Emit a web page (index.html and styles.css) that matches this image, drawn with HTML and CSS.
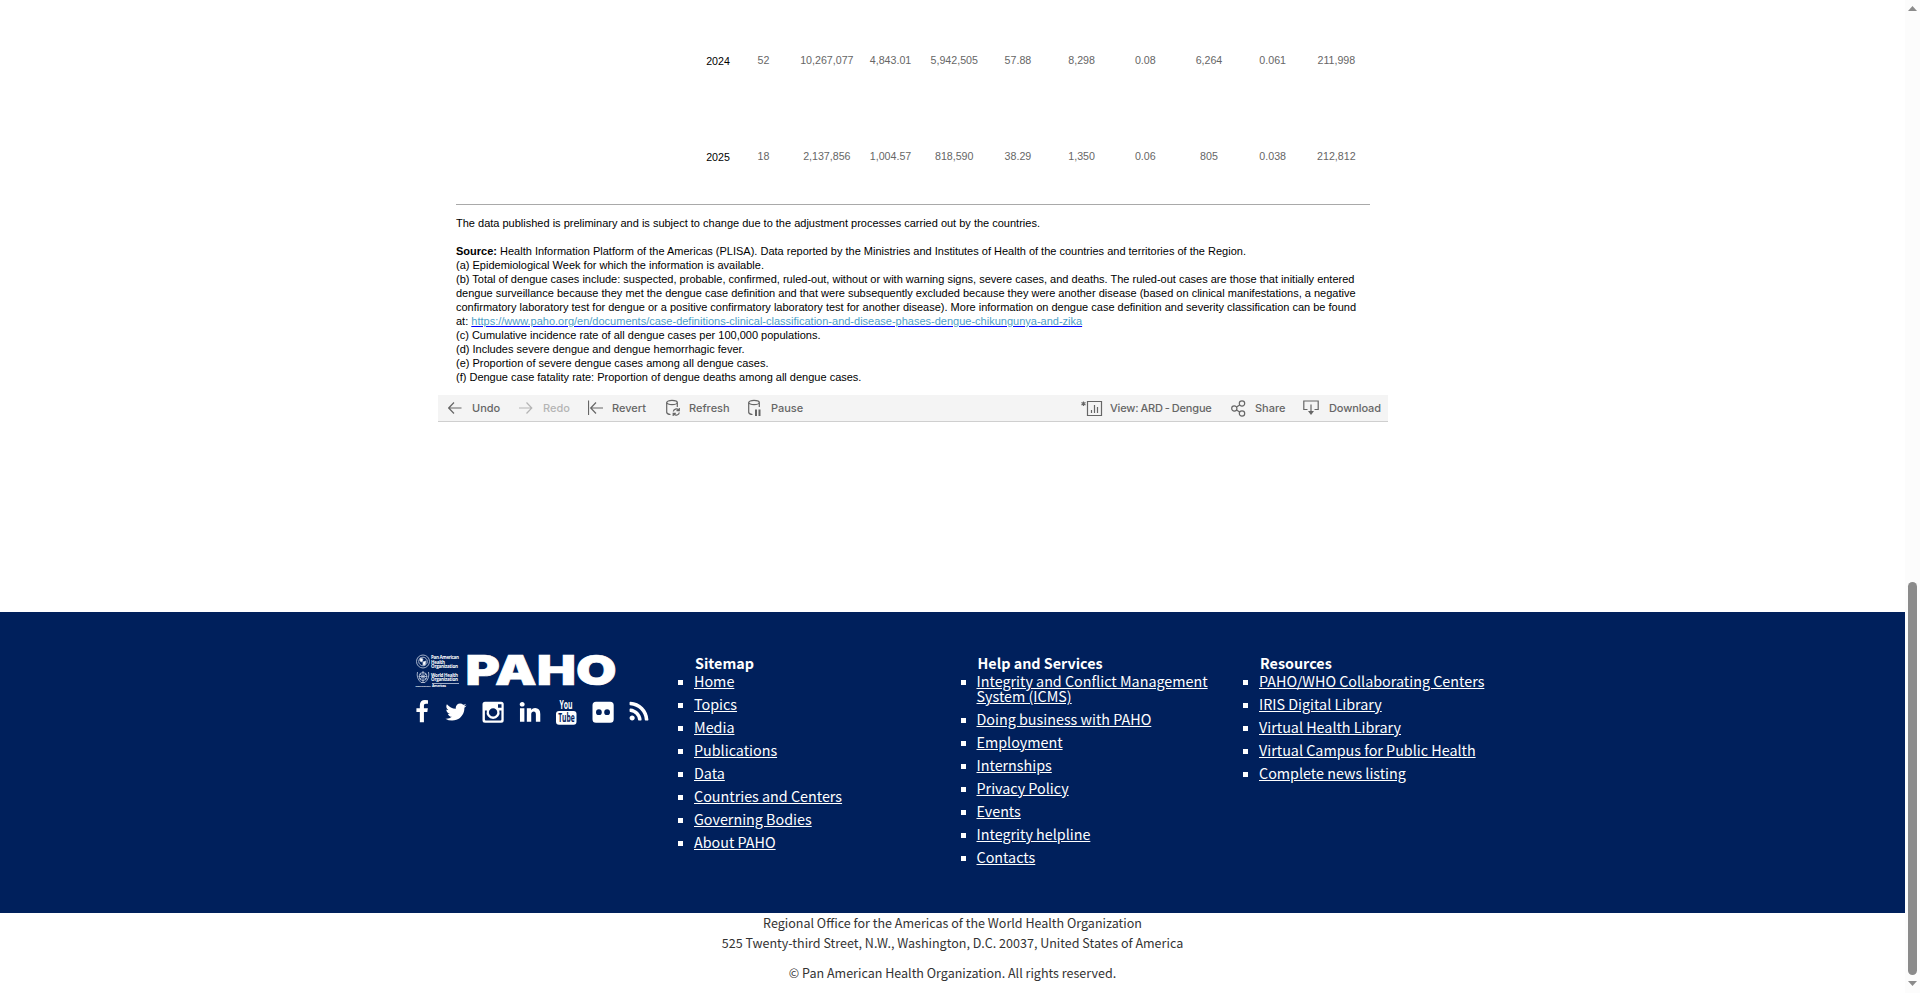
FILE: index.html
```html
<!DOCTYPE html>
<html lang="en">
<head>
<meta charset="utf-8">
<title>PAHO - Dengue</title>
<link rel="stylesheet" href="styles.css">
</head>
<body>
<div class="page">
  <main class="viz">
    <div class="dash">
      <div class="row"><span class="year">2024</span><span class="week">52</span><span>10,267,077</span><span>4,843.01</span><span>5,942,505</span><span>57.88</span><span>8,298</span><span>0.08</span><span>6,264</span><span>0.061</span><span>211,998</span></div>
      <div class="row"><span class="year">2025</span><span class="week">18</span><span>2,137,856</span><span>1,004.57</span><span>818,590</span><span>38.29</span><span>1,350</span><span>0.06</span><span>805</span><span>0.038</span><span>212,812</span></div>
      <div class="notes">
        <p>The data published is preliminary and is subject to change due to the adjustment processes carried out by the countries.</p>
        <p class="gap"><b>Source:</b> Health Information Platform of the Americas (PLISA). Data reported by the Ministries and Institutes of Health of the countries and territories of the Region.</p>
        <p>(a) Epidemiological Week for which the information is available.</p>
        <p>(b) Total of dengue cases include: suspected, probable, confirmed, ruled-out, without or with warning signs, severe cases, and deaths. The ruled-out cases are those that initially entered<br>dengue surveillance because they met the dengue case definition and that were subsequently excluded because they were another disease (based on clinical manifestations, a negative<br>confirmatory laboratory test for dengue or a positive confirmatory laboratory test for another disease). More information on dengue case definition and severity classification can be found<br>at: <a href="#">https://www.paho.org/en/documents/case-definitions-clinical-classification-and-disease-phases-dengue-chikungunya-and-zika</a></p>
        <p>(c) Cumulative incidence rate of all dengue cases per 100,000 populations.</p>
        <p>(d) Includes severe dengue and dengue hemorrhagic fever.</p>
        <p>(e) Proportion of severe dengue cases among all dengue cases.</p>
        <p>(f) Dengue case fatality rate: Proportion of dengue deaths among all dengue cases.</p>
      </div>
    </div>
    <div class="toolbar">
      <div class="tool undo"><svg width="14" height="12" viewBox="0 0 14 12"><path d="M13.500 6H1M6 .5L.7 6L6 11.500"/></svg><span>Undo</span></div>
      <div class="tool redo"><svg width="14" height="12" viewBox="0 0 14 12"><path d="M0 6H12.500M7.500 .5L12.800 6L7.500 11.500"/></svg><span>Redo</span></div>
      <div class="tool revert"><svg width="16" height="16" viewBox="0 0 16 16"><path d="M.5 .5V15M15 8H3M8 2.500L2.700 8L8 13.500"/></svg><span>Revert</span></div>
      <div class="tool refresh"><svg width="15" height="18" viewBox="0 0 15 18"><ellipse cx="6" cy="3.500" rx="5.300" ry="2.200"/><path d="M.7 3.500V13.500Q1.300 15.300 4.500 15.500M11.300 3.500V8M7.300 12.500A3 3 0 0 1 12.500 11L13 11.500M13.300 9V11.700H10.500M13.300 13.500A3 3 0 0 1 8 15L7.500 14.500M7.200 17V14.300H9.800"/></svg><span>Refresh</span></div>
      <div class="tool pause"><svg width="15" height="18" viewBox="0 0 15 18"><ellipse cx="6" cy="3.500" rx="5.300" ry="2.200"/><path d="M.7 3.500V13.500Q1.300 15.300 4.500 15.500M11.300 3.500V8"/><path class="fill" d="M7 10.500h2v6.500h-2zM10.500 10.500h2v6.500h-2z"/></svg><span>Pause</span></div>
      <div class="tool view"><svg width="22" height="17" viewBox="0 0 22 17"><path d="M6.500 1.500H20.500V15.500H6.500ZM10.500 10V13M13.500 5V13M16.500 7V13M2.500 1.500V6M.5 2.500L4.500 5M4.500 2.500L.5 5"/></svg><span>View: ARD - Dengue</span></div>
      <div class="tool share"><svg width="15" height="17" viewBox="0 0 15 17"><circle cx="3.300" cy="8.500" r="2.600"/><circle cx="11" cy="3.500" r="2.700"/><circle cx="11" cy="13.500" r="2.700"/><path d="M5.500 7.100L8.700 5M5.500 9.900L8.700 12"/></svg><span>Share</span></div>
      <div class="tool download"><svg width="16" height="16" viewBox="0 0 16 16"><path d="M4.500 9.500H.8V1H15.200V9.500H11.500M8 4.500V13"/><path class="fill" d="M5 11H11L8 15z"/></svg><span>Download</span></div>
    </div>
  </main>
  <footer class="footer">
    <div class="brand">
      <svg class="logo" width="202" height="36" viewBox="0 0 202 36">
        <g class="seal"><circle cx="8" cy="8.500" r="6.500"/><circle cx="8" cy="8.500" r="4.300"/><circle cx="8" cy="23.500" r="4"/><path d="M2.500 19Q1 25 6 29.500H10Q15 25 13.500 19M8 18V30M4 23.500H12M5 21L11 26M11 21L5 26"/><path class="fill" d="M5 5L8 6L7 9L5 8ZM8 9L11 8L10 12L8 12Z"/><path class="rule" d="M17 30.500H44"/></g>
        <g class="tiny"><text x="16" y="6" textLength="28">Pan American</text><text x="16" y="10.500" textLength="14">Health</text><text x="16" y="15" textLength="27">Organization</text><text x="16" y="23.500" textLength="27">World Health</text><text x="16" y="28" textLength="27">Organization</text><text class="micro" x="0.500" y="33.600" textLength="15">REGIONAL OFFICE FOR THE</text><text class="amer" x="17" y="34" textLength="14">Americas</text></g>
        <text class="name" x="50.500" y="32" textLength="151" lengthAdjust="spacingAndGlyphs">PAHO</text>
      </svg>
      <div class="social">
        <svg viewBox="0 0 1792 1792"><path d="M1343 12v264h-157q-86 0-116 36t-30 108v189h293l-39 296h-254v759h-306v-759h-255v-296h255v-218q0-186 104-288.500t277-102.500q147 0 228 12z"/></svg>
        <svg class="tw" viewBox="0 0 1792 1792"><path d="M1684 408q-67 98-162 167 1 14 1 42 0 130-38 259.500t-115.500 248.500-184.500 210.500-258 146-323 54.500q-271 0-496-145 35 4 78 4 225 0 401-138-105-2-188-64.500t-114-159.500q33 5 61 5 43 0 85-11-112-23-185.500-111.500t-73.500-205.500v-4q68 38 146 41-66-44-105-115t-39-154q0-88 44-163 121 149 294.500 238.500t371.500 99.500q-8-38-8-74 0-134 94.500-228.500t228.500-94.500q140 0 236 102 109-21 205-78-37 115-142 178 93-10 186-50z"/></svg>
        <svg class="ig" viewBox="0 0 24 24"><path fill-rule="evenodd" d="M4 1.800H20.200A2.500 2.500 0 0 1 22.700 4.300V20.200A2.500 2.500 0 0 1 20.200 22.700H4A2.500 2.500 0 0 1 1.500 20.200V4.300A2.500 2.500 0 0 1 4 1.800ZM17 4.200V7.800H20.500V4.200ZM3.900 10.500V19.500Q3.900 20.400 4.800 20.400H19.500Q20.400 20.400 20.400 19.500V10.500H18.300A6.500 6.500 0 1 1 5.900 10.500ZM12.100 8.200A4.200 4.200 0 1 0 12.100 16.600A4.200 4.200 0 1 0 12.100 8.200Z"/></svg>
        <svg viewBox="0 0 1792 1792"><path d="M477 625v991h-330v-991h330zm21-306q1 73-50.500 122t-135.500 49h-2q-82 0-132-49t-50-122q0-74 51.500-122.500t134.500-48.500 133 48.500 51 122.500zm1166 729v568h-329v-530q0-105-40.500-164.500t-126.500-59.500q-63 0-105.500 34.500t-63.500 85.500q-11 30-11 81v553h-329q2-399 2-647t-1-296l-1-48h329v144h-2q20-32 41-56t56.500-52 87-43.500 114.500-15.500q171 0 275 113.500t104 332.500z"/></svg>
        <svg class="yt" viewBox="0 0 24 26"><text x="5.500" y="9.300" textLength="13" lengthAdjust="spacingAndGlyphs">You</text><rect x="2" y="11" width="20.500" height="13.700" rx="3"/><text class="tube" x="4.200" y="22" textLength="16.500" lengthAdjust="spacingAndGlyphs">Tube</text></svg>
        <svg viewBox="0 0 24 24"><path fill-rule="evenodd" d="M5 1.800H19.200A3.500 3.500 0 0 1 22.700 5.300V19.200A3.500 3.500 0 0 1 19.200 22.700H5A3.500 3.500 0 0 1 1.500 19.200V5.300A3.500 3.500 0 0 1 5 1.800ZM7.900 9.300A2.900 2.900 0 1 0 7.900 15.100A2.900 2.900 0 1 0 7.900 9.300ZM16.100 9.300A2.900 2.900 0 1 0 16.100 15.100A2.900 2.900 0 1 0 16.100 9.300Z"/></svg>
        <svg class="rss" viewBox="0 0 1792 1792"><path d="M576 1344q0 80-56 136t-136 56-136-56-56-136 56-136 136-56 136 56 56 136zm512 123q2 28-17 48-18 21-47 21h-135q-25 0-43-16.500t-20-41.500q-22-229-184.500-391.500t-391.500-184.500q-25-2-41.500-20t-16.500-43v-135q0-29 21-47 17-17 43-17h5q160 13 306 80.500t259 181.500q114 113 181.500 259t80.500 306zm512 2q2 27-18 47-18 20-46 20h-143q-26 0-44.500-17.500t-19.500-42.500q-12-215-101-408.500t-231.500-336-336-231.500-408.500-102q-25-1-42.500-19.500t-17.500-43.500v-143q0-28 20-46 18-18 44-18h3q262 13 501.500 120t425.500 294q187 186 294 425.500t120 501.500z"/></svg>
      </div>
    </div>
    <nav class="col">
      <h2>Sitemap</h2>
      <ul><li><a href="#">Home</a></li><li><a href="#">Topics</a></li><li><a href="#">Media</a></li><li><a href="#">Publications</a></li><li><a href="#">Data</a></li><li><a href="#">Countries and Centers</a></li><li><a href="#">Governing Bodies</a></li><li><a href="#">About PAHO</a></li></ul>
    </nav>
    <nav class="col">
      <h2>Help and Services</h2>
      <ul><li><a href="#">Integrity and Conflict Management<br>System (ICMS)</a></li><li><a href="#">Doing business with PAHO</a></li><li><a href="#">Employment</a></li><li><a href="#">Internships</a></li><li><a href="#">Privacy Policy</a></li><li><a href="#">Events</a></li><li><a href="#">Integrity helpline</a></li><li><a href="#">Contacts</a></li></ul>
    </nav>
    <nav class="col">
      <h2>Resources</h2>
      <ul><li><a href="#">PAHO/WHO Collaborating Centers</a></li><li><a href="#">IRIS Digital Library</a></li><li><a href="#">Virtual Health Library</a></li><li><a href="#">Virtual Campus for Public Health</a></li><li><a href="#">Complete news listing</a></li></ul>
    </nav>
  </footer>
  <div class="legal">
    <p>Regional Office for the Americas of the World Health Organization</p>
    <p>525 Twenty-third Street, N.W., Washington, D.C. 20037, United States of America</p>
    <p class="copy">© Pan American Health Organization. All rights reserved.</p>
  </div>
</div>
<div class="scrollbar">
  <svg width="9" height="5" viewBox="0 0 9 5"><path d="M0 5L4.500 0L9 5z"/></svg>
  <div class="thumb"></div>
  <svg width="9" height="5" viewBox="0 0 9 5"><path d="M0 0L4.500 5L9 0z"/></svg>
</div>
</body>
</html>
```
FILE: styles.css
```css
* { box-sizing: border-box; margin: 0; padding: 0; }
body { display: flex; height: 993px; overflow: hidden; background: #fff; }
.page { width: 1905px; height: 993px; display: flex; flex-direction: column; }
.viz { width: 950px; height: 612px; margin-left: 438px; padding-top: 12px; font-family: "Liberation Sans", Arial, sans-serif; font-size: 10.667px; flex: none; }
.dash { height: 383px; padding: 0 18px; }
.row { height: 96px; padding-left: 244px; display: flex; align-items: center; color: #666; }
.row span { width: 63.700px; text-align: center; flex: none; }
.row .year { width: 36px; color: #000; padding-top: 2px; }
.row .week { width: 59px; padding-right: 4px; }
.notes { width: 914px; border-top: 1px solid #a9a9a9; padding-top: 11px; font-size: 11px; line-height: 14px; color: #000; white-space: nowrap; }
.notes .gap { margin-top: 14px; }
.notes a { color: #4e9fc7; text-decoration: underline #00f; }
.toolbar { height: 27px; display: flex; background: #f4f4f4; border-bottom: 1px solid #cfcfcf; font-family: Inter, sans-serif; font-size: 11px; font-weight: 500; color: #666; padding-left: 10px; }
.tool { display: flex; align-items: center; height: 26px; white-space: nowrap; flex: none; }
.tool svg { fill: none; stroke: #666; stroke-width: 1.200; flex: none; }
.tool .fill { fill: #666; stroke: none; }
.undo { width: 71px; gap: 10px; }
.redo { width: 61px; gap: 10px; margin-right: 8px; color: #b4b4b4; }
.redo svg { stroke: #b4b4b4; }
.revert { width: 78px; gap: 8px; }
.refresh { width: 82px; gap: 8px; }
.pause { width: 333px; gap: 8px; }
.view { width: 150px; gap: 7px; }
.view span { letter-spacing: -.18px; word-spacing: -.700px; }
.share { width: 72px; gap: 9px; }
.download { gap: 10px; letter-spacing: -.1px; }
.footer { height: 301px; flex: none; background: #00205c; display: flex; padding: 41px 0 0 415px; font-family: "Noto Sans CJK SC", sans-serif; color: #fff; }
.brand { width: 263px; flex: none; }
.logo { display: block; }
.seal { fill: none; stroke: #c9d2e2; stroke-width: .8; }
.seal .fill { fill: #fff; }
.tiny text { fill: #fff; font: bold 4.500px "Open Sans", sans-serif; }
.tiny .micro { font-size: 1.500px; }
.tiny .amer { font-size: 3.500px; }
.logo .name { fill: #fff; stroke: #fff; stroke-width: .7; font: 900 41px Inter, sans-serif; }
.social { display: flex; gap: 12.700px; margin: 11px 0 0 -5px; }
.social svg { width: 24px; height: 24px; fill: #fff; flex: none; overflow: visible; }
.social .yt { height: 26px; }
.social .tw { margin-left: -3.100px; }
.social .ig { margin-left: .700px; }
.social .rss { margin-left: -.600px; }
.yt text { font: bold 11.500px "Open Sans", sans-serif; }
.yt .tube { fill: #00205c; }
.col { width: 282.500px; flex: none; }
.col h2 { font-size: 14.340px; line-height: 20px; font-weight: 700; padding-left: 17px; height: 20px; }
.col ul { list-style: none; }
.col li { position: relative; padding-left: 16px; font-size: 14.340px; line-height: 15px; margin-bottom: 8px; white-space: nowrap; }
.col li::before { content: ""; position: absolute; left: 0; top: 7px; width: 5px; height: 5px; background: #fff; }
.col a { color: #fff; text-decoration: underline; }
.legal { text-align: center; font-family: "Noto Sans CJK SC", sans-serif; font-size: 12.540px; line-height: 20px; color: #333; }
.legal .copy { margin-top: 10px; }
.scrollbar { width: 15px; height: 993px; background: #fcfcfc; display: flex; flex-direction: column; align-items: center; padding: 6px 0 7px; }
.scrollbar svg { fill: #8b8b8b; flex: none; }
.thumb { width: 9px; height: 393px; border-radius: 5px; background: #8b8b8b; margin-top: auto; margin-bottom: 6px; flex: none; }
```
